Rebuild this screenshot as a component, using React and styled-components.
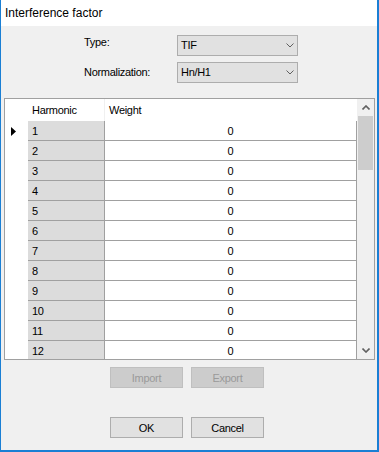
import React from "react";
import styled, { createGlobalStyle } from "styled-components";

const GlobalStyle = createGlobalStyle`
  html, body { margin: 0; padding: 0; background: #f0f0f0; }
  body { font-family: "Liberation Sans", Arial, sans-serif; font-size: 11px; color: #000; }
  * { box-sizing: border-box; }
`;

const Window = styled.div`
  width: 379px;
  height: 452px;
  border-left: 1px solid #1a7fd4;
  border-right: 2px solid #1a7fd4;
  border-bottom: 2px solid #1a7fd4;
  background: #f0f0f0;
  display: flex;
  flex-direction: column;
  overflow: hidden;
`;

const TitleBar = styled.div`
  height: 26px;
  flex: none;
  background: #fff;
  padding-left: 4px;
  line-height: 26px;
  font-size: 12px;
  font-family: "Liberation Sans", Arial, sans-serif;
`;

const Body = styled.div`
  flex: 1;
  display: flex;
  flex-direction: column;
  padding: 9px 2px 0 3px;
  letter-spacing: -0.3px;
`;

const Form = styled.div`
  display: grid;
  grid-template-columns: 93px 121px;
  row-gap: 6px;
  margin-left: 80px;
`;

const Label = styled.div`
  padding-top: ${(p) => p.$offset}px;
  line-height: 13px;
`;

const Combo = styled.div`
  height: 21px;
  border: 1px solid #adadad;
  background: #e1e1e1;
  display: flex;
  align-items: center;
  justify-content: space-between;
  padding: 0 3px 0 3px;
  line-height: 19px;
`;

const Chevron = ({ up, bold }) => (
  <svg width="8" height="5" viewBox="0 0 8 5" style={{ display: "block" }}>
    <polyline
      points={up ? "0.5,4.5 4,1 7.5,4.5" : "0.5,0.5 4,4 7.5,0.5"}
      fill="none"
      stroke="#606060"
      strokeWidth={bold ? 1.6 : 1}
    />
  </svg>
);

const GridBox = styled.div`
  margin-top: 15px;
  height: 262px;
  border: 1px solid #a0a0a0;
  background: #fff;
  display: flex;
  overflow: hidden;
`;

const Table = styled.div`
  width: 352px;
  flex: none;
  overflow: hidden;
`;

const Row = styled.div`
  display: grid;
  grid-template-columns: 23px 77px 252px;
  height: ${(p) => (p.$header ? 22 : 20)}px;
`;

const HeaderCell = styled.div`
  background: #fff;
  padding-left: 4px;
  display: flex;
  align-items: center;
  border-right: ${(p) => (p.$sep ? "1px solid #f0f0f0" : "none")};
`;

const RowHead = styled.div`
  background: #fff;
  display: flex;
  align-items: center;
  padding-left: 6px;
`;

const KeyCell = styled.div`
  background: #dcdcdc;
  border-right: 1px solid #a0a0a0;
  border-bottom: 1px solid #a0a0a0;
  padding-left: 4px;
  display: flex;
  align-items: center;
`;

const ValueCell = styled.div`
  background: #fff;
  border-right: 1px solid #a0a0a0;
  border-bottom: 1px solid #a0a0a0;
  display: flex;
  align-items: center;
  justify-content: center;
`;

const ScrollBar = styled.div`
  width: 17px;
  flex: none;
  background: #f0f0f0;
  display: flex;
  flex-direction: column;
`;

const ScrollButton = styled.div`
  height: 17px;
  flex: none;
  display: flex;
  justify-content: center;
  align-items: center;
  padding-left: 1px;
`;

const Track = styled.div`
  flex: 1;
  padding: 0 1px;
`;

const Thumb = styled.div`
  height: 54px;
  background: #cdcdcd;
`;

const ButtonRow = styled.div`
  display: flex;
  gap: 8px;
  margin-left: 106px;
  margin-top: ${(p) => p.$top}px;
`;

const Button = styled.div`
  width: 73px;
  height: 21px;
  border: 1px solid ${(p) => (p.$disabled ? "#bfbfbf" : "#adadad")};
  background: ${(p) => (p.$disabled ? "#cccccc" : "#e1e1e1")};
  color: ${(p) => (p.$disabled ? "#9a9a9a" : "#000")};
  display: flex;
  align-items: center;
  justify-content: center;
`;

const Arrow = () => (
  <svg width="5" height="9" viewBox="0 0 5 9" style={{ display: "block" }}>
    <polygon points="0,0 5,4.5 0,9" fill="#000" />
  </svg>
);

const rows = Array.from({ length: 12 }, (_, i) => i + 1);

export default function App() {
  return (
    <>
      <GlobalStyle />
      <Window>
        <TitleBar>Interference factor</TitleBar>
        <Body>
          <Form>
            <Label $offset={1}>Type:</Label>
            <Combo>
              <span>TIF</span>
              <Chevron />
            </Combo>
            <Label $offset={4}>Normalization:</Label>
            <Combo>
              <span>Hn/H1</span>
              <Chevron />
            </Combo>
          </Form>
          <GridBox>
            <Table>
              <Row $header>
                <HeaderCell />
                <HeaderCell $sep>Harmonic</HeaderCell>
                <HeaderCell>Weight</HeaderCell>
              </Row>
              {rows.map((n) => (
                <Row key={n}>
                  <RowHead>{n === 1 && <Arrow />}</RowHead>
                  <KeyCell>{n}</KeyCell>
                  <ValueCell>0</ValueCell>
                </Row>
              ))}
            </Table>
            <ScrollBar>
              <ScrollButton>
                <Chevron up bold />
              </ScrollButton>
              <Track>
                <Thumb />
              </Track>
              <ScrollButton>
                <Chevron bold />
              </ScrollButton>
            </ScrollBar>
          </GridBox>
          <ButtonRow $top={7}>
            <Button $disabled>Import</Button>
            <Button $disabled>Export</Button>
          </ButtonRow>
          <ButtonRow $top={29}>
            <Button>OK</Button>
            <Button>Cancel</Button>
          </ButtonRow>
        </Body>
      </Window>
    </>
  );
}
